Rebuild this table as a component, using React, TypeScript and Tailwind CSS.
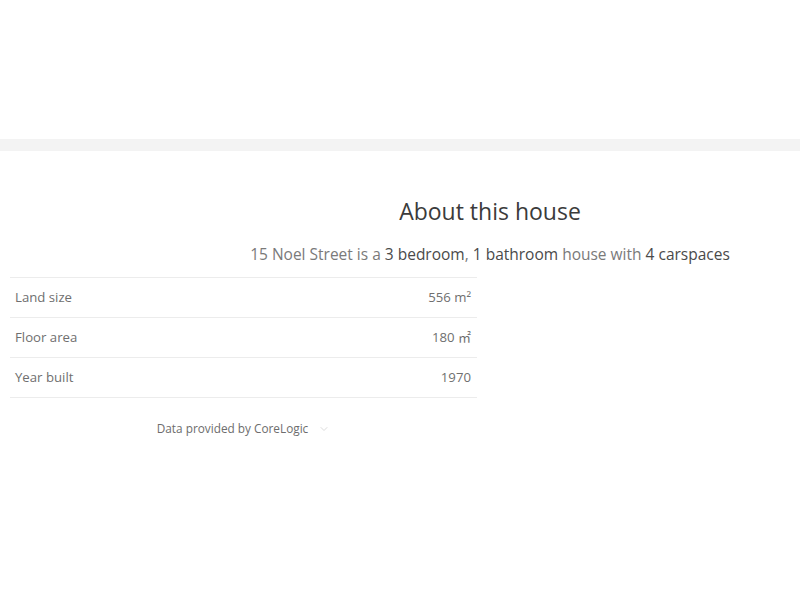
import { ChevronDown } from "lucide-react"

const rows = [
  { label: "Land size", value: <>556 m²</> },
  { label: "Floor area", value: <>180 <span className="font-['Noto_Sans_CJK_JP',sans-serif] text-[13px]">㎡</span></> },
  { label: "Year built", value: <>1970</> },
]

export default function App() {
  return (
    <div className="w-[800px] h-[600px] bg-white font-['Open_Sans',sans-serif] overflow-hidden">
      <div className="h-[139px]" />
      <div className="h-[12px] bg-[#f3f3f3]" />

      <div className="ml-[250px] w-[480px] pt-[45px] text-center">
        <h2 className="text-[23px] leading-[31px] text-[#3b3b3b]">About this house</h2>
        <p className="mt-[17px] text-[15.5px] leading-[20px] text-[#7a7a7a]">
          15 Noel Street is a <span className="text-[#4a4a4a]">3 bedroom</span>,{" "}
          <span className="text-[#4a4a4a]">1 bathroom</span> house with{" "}
          <span className="text-[#4a4a4a]">4 carspaces</span>
        </p>
      </div>

      <div className="ml-[10px] w-[467px] mt-[13px]">
        <div className="border-t border-[#ececec]">
          {rows.map((r) => (
            <div
              key={r.label}
              className="h-[40px] flex items-center justify-between pl-[5px] pr-[6px] border-b border-[#ececec] text-[13.2px] text-[#6f6f6f]"
            >
              <span>{r.label}</span>
              <span>{r.value}</span>
            </div>
          ))}
        </div>
        <div className="mt-[22px] flex items-center justify-center gap-[6px] text-[11.8px] text-[#6d6d6d]">
          <span>Data provided by CoreLogic</span>
          <ChevronDown className="size-[12px] text-[#cfcfcf] ml-[4px]" strokeWidth={1.5} />
        </div>
      </div>
    </div>
  )
}
